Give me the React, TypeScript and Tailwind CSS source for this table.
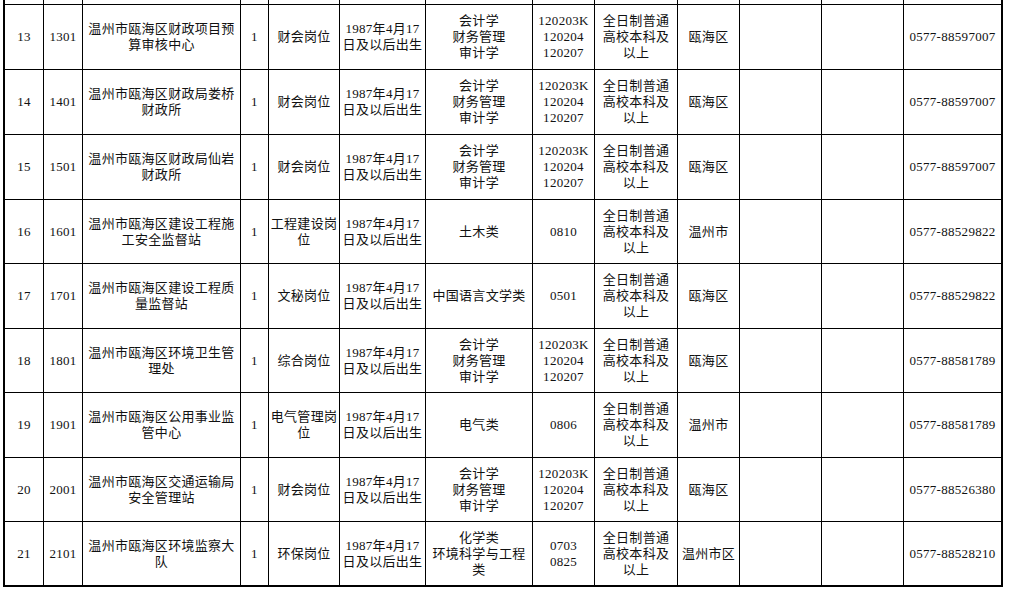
const ACC = ["会计学", "财务管理", "审计学"];
const ACC_CODES = ["120203K", "120204", "120207"];
const EDU = ["全日制普通", "高校本科及", "以上"];
const BIRTH = ["1987年4月17", "日及以后出生"];

type Row = {
	no: string;
	code: string;
	unit: string[];
	post: string[];
	major: string[];
	majorCode: string[];
	area: string;
	phone: string;
	h: string;
};

const rows: Row[] = [
	{ no: "13", code: "1301", unit: ["温州市瓯海区财政项目预", "算审核中心"], post: ["财会岗位"], major: ACC, majorCode: ACC_CODES, area: "瓯海区", phone: "0577-88597007", h: "h-[65px] border-b" },
	{ no: "14", code: "1401", unit: ["温州市瓯海区财政局娄桥", "财政所"], post: ["财会岗位"], major: ACC, majorCode: ACC_CODES, area: "瓯海区", phone: "0577-88597007", h: "h-[65px] border-b" },
	{ no: "15", code: "1501", unit: ["温州市瓯海区财政局仙岩", "财政所"], post: ["财会岗位"], major: ACC, majorCode: ACC_CODES, area: "瓯海区", phone: "0577-88597007", h: "h-[65px] border-b" },
	{ no: "16", code: "1601", unit: ["温州市瓯海区建设工程施", "工安全监督站"], post: ["工程建设岗", "位"], major: ["土木类"], majorCode: ["0810"], area: "温州市", phone: "0577-88529822", h: "h-[64px] border-b" },
	{ no: "17", code: "1701", unit: ["温州市瓯海区建设工程质", "量监督站"], post: ["文秘岗位"], major: ["中国语言文学类"], majorCode: ["0501"], area: "瓯海区", phone: "0577-88529822", h: "h-[65px] border-b" },
	{ no: "18", code: "1801", unit: ["温州市瓯海区环境卫生管", "理处"], post: ["综合岗位"], major: ACC, majorCode: ACC_CODES, area: "瓯海区", phone: "0577-88581789", h: "h-[64px] border-b" },
	{ no: "19", code: "1901", unit: ["温州市瓯海区公用事业监", "管中心"], post: ["电气管理岗", "位"], major: ["电气类"], majorCode: ["0806"], area: "温州市", phone: "0577-88581789", h: "h-[65px] border-b" },
	{ no: "20", code: "2001", unit: ["温州市瓯海区交通运输局", "安全管理站"], post: ["财会岗位"], major: ACC, majorCode: ACC_CODES, area: "瓯海区", phone: "0577-88526380", h: "h-[64px] border-b" },
	{ no: "21", code: "2101", unit: ["温州市瓯海区环境监察大", "队"], post: ["环保岗位"], major: ["化学类", "环境科学与工程", "类"], majorCode: ["0703", "0825"], area: "温州市区", phone: "0577-88528210", h: "h-[63px]" },
];

const grid =
	"grid grid-cols-[39px_39px_158px_28px_71px_86px_107px_62px_83px_62px_82px_82px_97px] border-black";

function Cell({ lines, last }: { lines?: string[]; last?: boolean }) {
	return (
		<div
			className={`flex flex-col items-center justify-center whitespace-nowrap text-center leading-[16px] ${last ? "" : "border-r border-black"}`}
		>
			{lines?.map((l, i) => (
				<span key={i}>{l}</span>
			))}
		</div>
	);
}

export default function App() {
	return (
		<div className="h-[590px] w-[1011px] overflow-hidden bg-white">
			<div
				className="ml-[3px] w-[1000px] border-x-2 border-b-2 border-black text-[13px] tracking-[0.3px] text-[#111]"
				style={{ fontFamily: '"Liberation Serif", "Noto Sans CJK SC", serif' }}
			>
				{/* tail of the previous row, cut by the screenshot */}
				<div className={`${grid} h-[5px] border-b`}>
					{Array.from({ length: 13 }).map((_, i) => (
						<Cell key={i} last={i === 12} />
					))}
				</div>
				{rows.map((r) => (
					<div key={r.no} className={`${grid} ${r.h}`}>
						<Cell lines={[r.no]} />
						<Cell lines={[r.code]} />
						<Cell lines={r.unit} />
						<Cell lines={["1"]} />
						<Cell lines={r.post} />
						<Cell lines={BIRTH} />
						<Cell lines={r.major} />
						<Cell lines={r.majorCode} />
						<Cell lines={EDU} />
						<Cell lines={[r.area]} />
						<Cell />
						<Cell />
						<Cell lines={[r.phone]} last />
					</div>
				))}
			</div>
		</div>
	);
}
